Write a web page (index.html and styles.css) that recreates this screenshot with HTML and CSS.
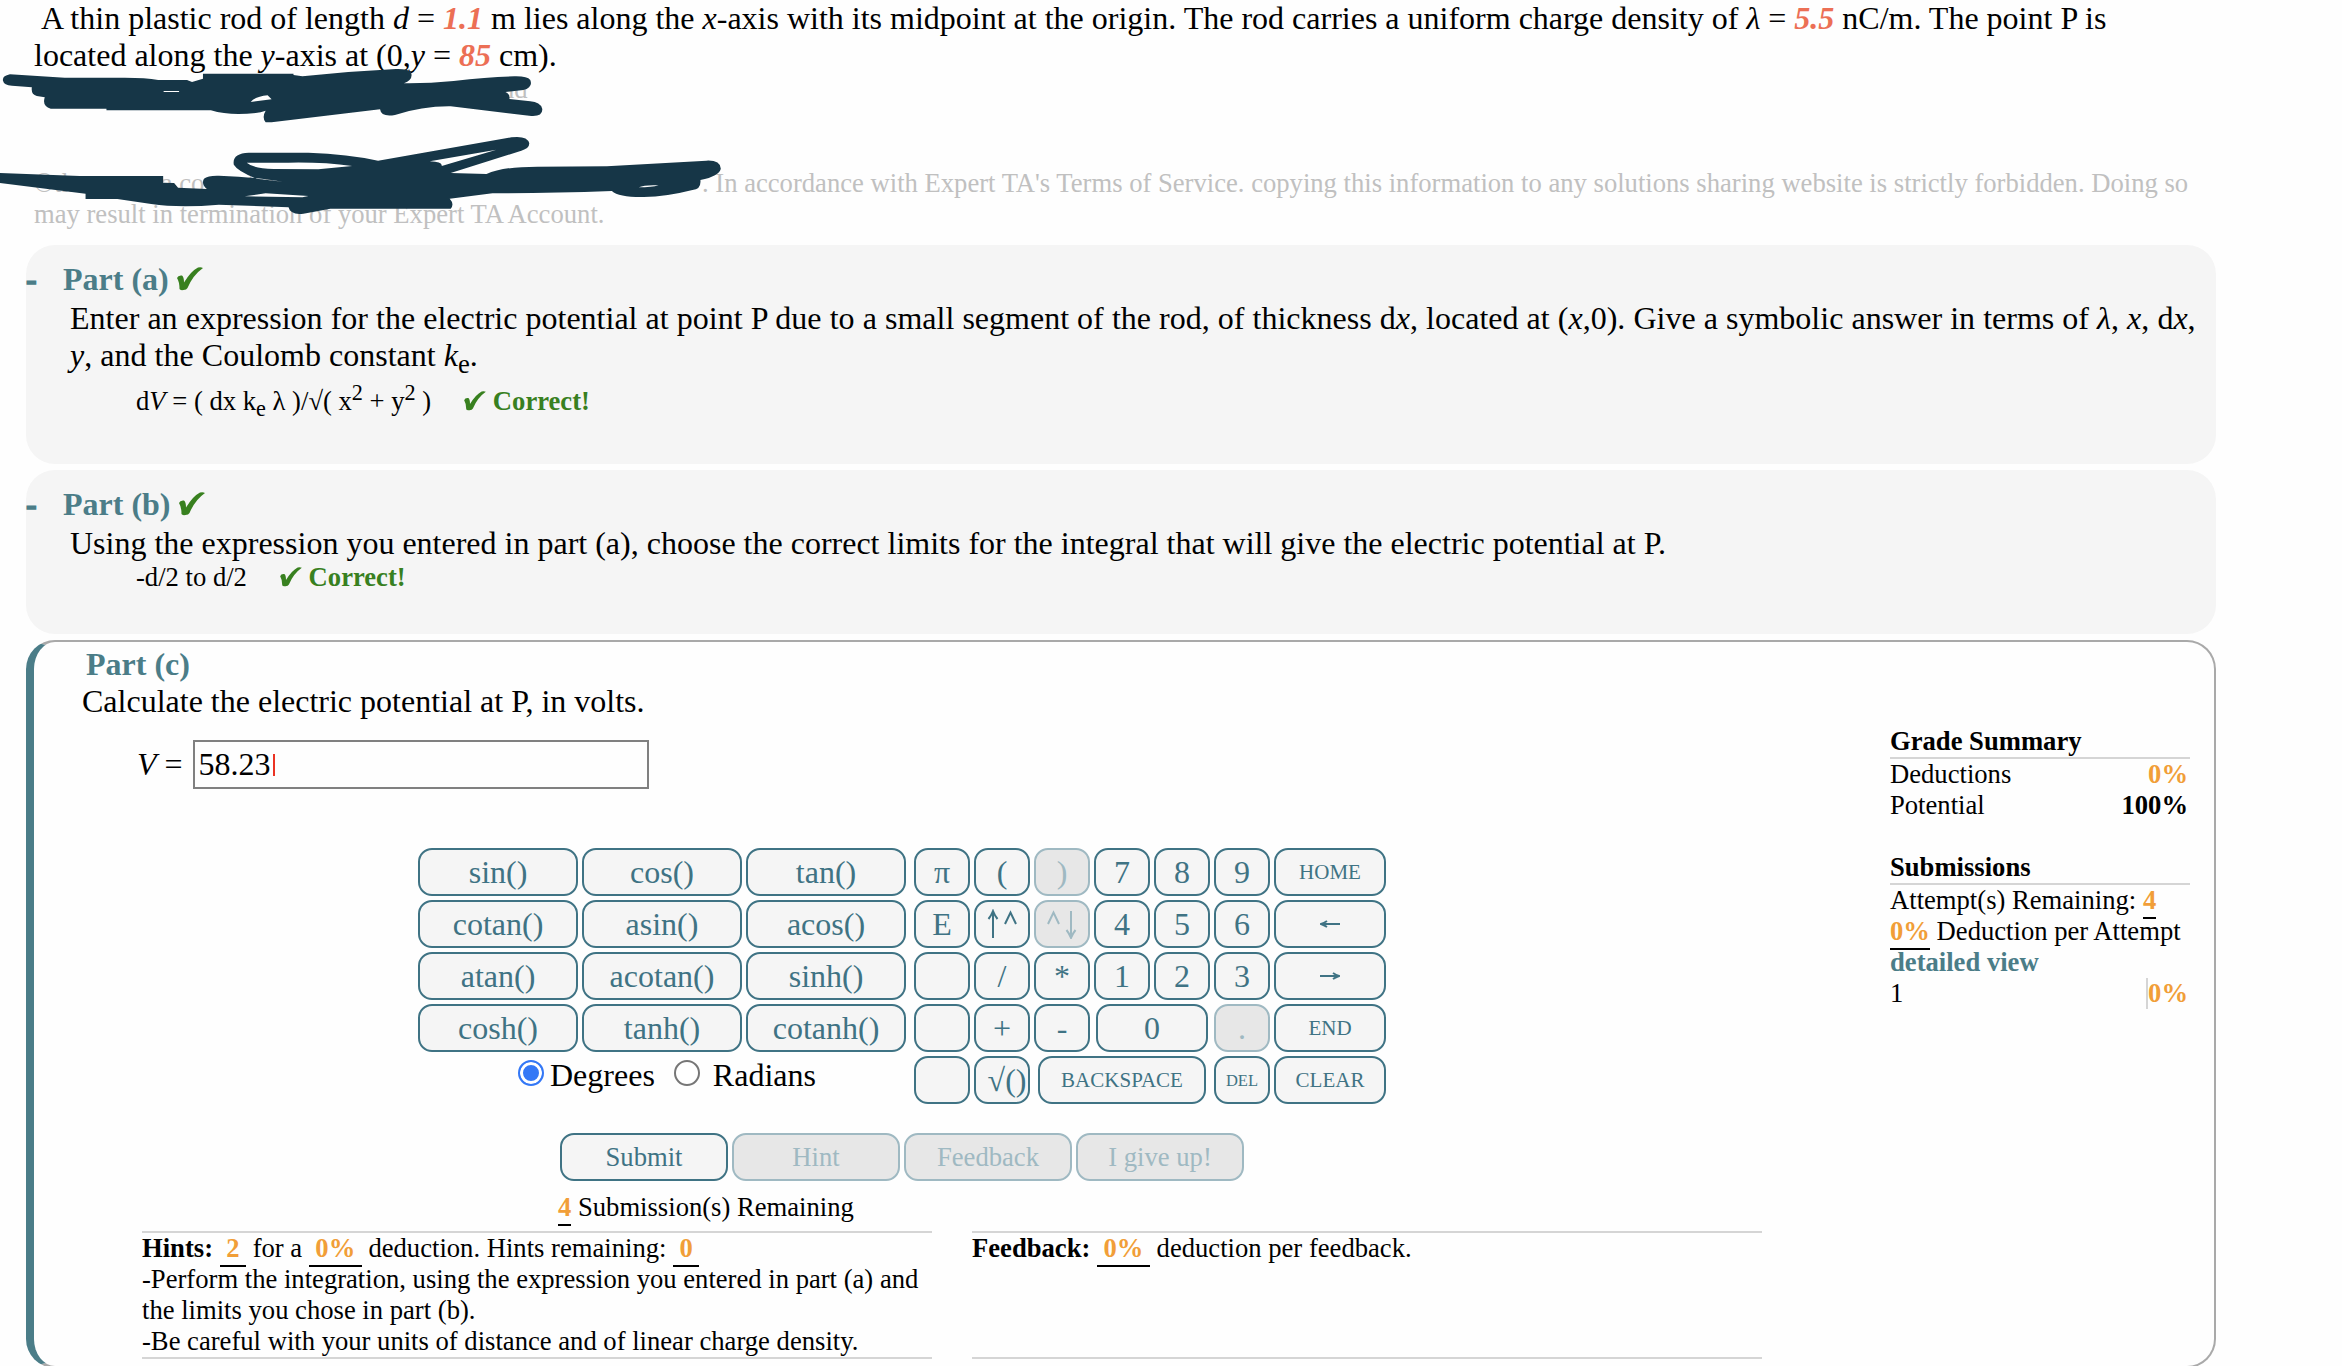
FILE: index.html
```html
<!DOCTYPE html>
<html lang="en">
<head>
  <meta charset="UTF-8" />
  <meta name="viewport" content="width=device-width, initial-scale=1.0" />
  <title>Expert TA</title>
  <link rel="stylesheet" href="styles.css">
</head>
<body>
  <div class="problem">
    <p class="statement">A thin plastic rod of length <i>d</i> = <b class="var">1.1</b> m lies along the <i>x</i>-axis with its midpoint at the origin. The rod carries a uniform charge density of <i>λ</i> = <b class="var">5.5</b> nC/m. The point P is<br>located along the <i>y</i>-axis at (0,<i>y</i> = <b class="var">85</b> cm).</p>
    <div class="owner">nd</div>
    <p class="notice"><span class="tracking">©theexpertta.com - tracking id:</span><span class="terms">. In accordance with Expert TA's Terms of Service. copying this information to any solutions sharing website is strictly forbidden. Doing so</span><br>may result in termination of your Expert TA Account.</p>
    <svg class="marker" viewBox="0 0 1568 720" preserveAspectRatio="none">
      <path d="M20 223Q4 228 6 242Q8 256 24 257L64 262Q62 284 74 288L90 292Q84 318 102 326H214V331H424Q466 350 524 337L534 332Q526 352 534 367L546 367L764 328Q766 352 794 345Q850 318 906 319L1068 348Q1092 350 1090 326Q1086 306 1066 304L1024 297Q1026 282 1016 276L1052 270Q1072 262 1066 240Q1060 228 1034 229Q984 230 912 243Q860 251 812 250Q832 238 826 216Q820 206 796 207L700 216L608 229L590 225V221H408V236L386 246L376 240H318Q290 232 240 233H130ZM330 273H360V276H328ZM504 306Q512 290 538 286L546 298Z" />
      <path d="M0 519L160 528H328V548L350 549L358 563L416 567Q404 552 410 536Q418 526 440 527Q520 532 568 545L516 536Q478 514 470 494Q466 460 500 458H620Q700 462 760 482L1028 412Q1060 406 1064 430Q1064 446 1048 452L906 519L978 522Q1010 500 1080 500L1220 499L1420 482Q1448 480 1449 506Q1446 528 1408 540Q1410 568 1392 570Q1340 590 1294 591Q1244 592 1230 573Q1100 580 990 580L904 596Q914 612 906 626H664L610 641Q584 646 580 622L440 614Q360 624 304 612L236 597H172V581L0 549ZM496 488Q510 506 550 507L640 508L708 498Q650 486 580 488ZM864 484Q890 486 888 498L998 449ZM492 589L534 580L620 588L608 592ZM1284 562Q1296 554 1324 556Q1310 562 1284 562Z" />
    </svg>
  </div>

  <div class="part done">
    <h2><span class="toggle">-</span>Part (a) <svg class="check" viewBox="0 0 26 24"><path d="M0 11Q1 8 5 8.500Q7 10 7 15.500Q14 4 21 .5Q24 -.3 26 1Q16 8 10.500 21Q9.500 23 6.500 23Q3 23.500 2.500 22Q2.500 15 0 11Z" /></svg></h2>
    <p class="question long">Enter an expression for the electric potential at point P due to a small segment of the rod, of thickness d<i>x</i>, located at (<i>x</i>,0). Give a symbolic answer in terms of <i>λ</i>, <i>x</i>, d<i>x</i>,<br><i>y</i>, and the Coulomb constant <i>k</i><sub>e</sub>.</p>
    <div class="answer formula"><span class="expr">d<i>V</i> = ( dx k<sub>e</sub> λ )/√( x<sup>2</sup> + y<sup>2</sup> )</span><b class="correct"><svg class="check" viewBox="0 0 26 24"><path d="M0 11Q1 8 5 8.500Q7 10 7 15.500Q14 4 21 .5Q24 -.3 26 1Q16 8 10.500 21Q9.500 23 6.500 23Q3 23.500 2.500 22Q2.500 15 0 11Z" /></svg> Correct!</b></div>
  </div>

  <div class="part done part-b">
    <h2><span class="toggle">-</span>Part (b) <svg class="check" viewBox="0 0 26 24"><path d="M0 11Q1 8 5 8.500Q7 10 7 15.500Q14 4 21 .5Q24 -.3 26 1Q16 8 10.500 21Q9.500 23 6.500 23Q3 23.500 2.500 22Q2.500 15 0 11Z" /></svg></h2>
    <p class="question">Using the expression you entered in part (a), choose the correct limits for the integral that will give the electric potential at P.</p>
    <div class="answer"><span class="expr">-d/2 to d/2</span><b class="correct"><svg class="check" viewBox="0 0 26 24"><path d="M0 11Q1 8 5 8.500Q7 10 7 15.500Q14 4 21 .5Q24 -.3 26 1Q16 8 10.500 21Q9.500 23 6.500 23Q3 23.500 2.500 22Q2.500 15 0 11Z" /></svg> Correct!</b></div>
  </div>

  <div class="part active">
    <div class="work">
      <h2>Part (c)</h2>
      <p class="question">Calculate the electric potential at P, in volts.</p>
      <div class="entry"><span><i>V</i> =</span><div class="field">58.23<span class="caret"></span></div></div>

      <div class="keypad">
        <div class="functions">
          <div class="trig">
            <button>sin()</button><button>cos()</button><button>tan()</button>
            <button>cotan()</button><button>asin()</button><button>acos()</button>
            <button>atan()</button><button>acotan()</button><button>sinh()</button>
            <button>cosh()</button><button>tanh()</button><button>cotanh()</button>
          </div>
          <div class="units">
            <label><span class="radio on"></span>Degrees</label>
            <label class="radians"><span class="radio"></span>Radians</label>
          </div>
        </div>
        <div class="numbers">
          <button>π</button><button>(</button><button disabled>)</button><button>7</button><button>8</button><button>9</button><button class="word">HOME</button>
          <button>E</button>
          <button><svg width="30" height="30" viewBox="0 0 30 30"><path d="M6 2V29M1.500 10Q4 7 6 2Q8 7 10.500 10M18 15L23.500 3.500L29 15" /></svg></button>
          <button disabled><svg width="30" height="30" viewBox="0 0 30 30"><path d="M1 15L6.500 3.500L12 15M24 2V29M19.500 21Q22 24 24 29Q26 24 28.500 21" /></svg></button>
          <button>4</button><button>5</button><button>6</button>
          <button><svg width="20" height="12" viewBox="0 0 20 12"><path d="M1 6H20M7 3Q4 5 1 6Q4 7 7 9" /></svg></button>
          <button></button><button>/</button><button>*</button><button>1</button><button>2</button><button>3</button>
          <button><svg width="20" height="12" viewBox="0 0 20 12"><path d="M0 6H19M13 3Q16 5 19 6Q16 7 13 9" /></svg></button>
          <button></button><button>+</button><button>-</button><button class="zero">0</button><button disabled>.</button><button class="word">END</button>
          <button></button><button class="root">√()</button><button class="word backspace">BACKSPACE</button><button class="word del">DEL</button><button class="word">CLEAR</button>
        </div>
      </div>

      <div class="actions">
        <button>Submit</button><button disabled>Hint</button><button disabled>Feedback</button><button disabled>I give up!</button>
      </div>
      <div class="remaining"><b class="amount">4</b> Submission(s) Remaining</div>

      <div class="help">
        <div class="help-box">
          <b>Hints:</b> <b class="amount pad">2</b> for a <b class="amount pad">0%</b> deduction. Hints remaining: <b class="amount pad">0</b><br>
          -Perform the integration, using the expression you entered in part (a) and<br>
          the limits you chose in part (b).<br>
          -Be careful with your units of distance and of linear charge density.
        </div>
        <div class="help-box">
          <b>Feedback:</b> <b class="amount pad">0%</b> deduction per feedback.
        </div>
      </div>
    </div>

    <div class="summary">
      <h3>Grade Summary</h3>
      <div class="row"><span>Deductions</span><b class="orange">0%</b></div>
      <div class="row"><span>Potential</span><b>100%</b></div>
      <h3 class="second">Submissions</h3>
      <div>Attempt(s) Remaining: <b class="amount">4</b></div>
      <div><b class="amount">0%</b> Deduction per Attempt</div>
      <div><b class="detail">detailed view</b></div>
      <div class="row"><span>1</span><b class="orange score">0%</b></div>
    </div>
  </div>
</body>
</html>
```
FILE: styles.css
```css
* {
  box-sizing: border-box;
}
body {
  margin: 0;
  height: 1366px;
  overflow: hidden;
  background: #fefefe;
  color: #000;
  font-family: "Liberation Serif", Times, serif;
  font-size: 26.640px;
  line-height: 31px;
}
p, h2, h3 {
  margin: 0;
}
sub, sup {
  line-height: 0;
}
.problem {
  position: relative;
  height: 245px;
  padding-left: 34px;
  white-space: nowrap;
}
.statement {
  font-size: 32px;
  line-height: 37px;
  text-indent: 7px;
}
.var {
  color: #ec6f55;
  font-style: italic;
}
.owner {
  height: 94px;
  padding-left: 467px;
  color: #c0c0c0;
}
.notice {
  color: #c0c0c0;
}
.tracking {
  display: inline-block;
  width: 668px;
}
.marker {
  position: absolute;
  left: 0;
  top: 0;
  width: 780px;
  height: 240px;
  fill: #163647;
  fill-rule: evenodd;
}
.part {
  width: 2190px;
  margin-left: 26px;
  border-radius: 29px;
}
.done {
  height: 219px;
  margin-bottom: 6px;
  padding: 16px 0 0 37px;
  background: #f5f5f5;
}
.part-b {
  height: 164px;
}
h2 {
  font-size: 32px;
  line-height: 37px;
  color: #4b7d88;
}
.toggle {
  display: inline-block;
  width: 37px;
  margin-left: -37px;
  -webkit-text-stroke: 1.500px #4b7d88;
}
.check {
  width: 26px;
  height: 24px;
  fill: #38801f;
  vertical-align: -1px;
}
.question {
  font-size: 32px;
  line-height: 37px;
  white-space: nowrap;
}
.long {
  word-spacing: 0.100px;
}
.done .question {
  margin: 2px 0 0 7px;
}
.answer {
  margin-left: 73px;
  white-space: nowrap;
}
.formula {
  margin-top: 12px;
}
.correct {
  color: #38801f;
  margin-left: 33px;
}
.correct .check {
  width: 22px;
  height: 20px;
}
.active {
  display: flex;
  height: 728px;
  border: 2px solid #a9a9a9;
  border-left: 8px solid #4b7d88;
}
.work {
  width: 1856px;
  padding-top: 4px;
}
.active h2 {
  padding-left: 52px;
}
.active .question {
  padding-left: 48px;
}
.entry {
  display: flex;
  align-items: center;
  gap: 10px;
  padding: 20px 0 0 103px;
  font-size: 32px;
}
.field {
  display: flex;
  align-items: center;
  width: 456px;
  height: 49px;
  padding-left: 4px;
  border: 2px solid #808080;
}
.caret {
  width: 2px;
  height: 22px;
  margin-left: 2px;
  background: #eb3323;
}
.keypad {
  display: flex;
  gap: 8px;
  margin: 59px 0 0 384px;
}
button {
  display: flex;
  align-items: center;
  justify-content: center;
  height: 48px;
  padding: 0;
  border: 2px solid #3f7384;
  border-radius: 14px;
  background: #f5f5f5;
  color: #3f7384;
  font-family: inherit;
  font-size: 32px;
  line-height: 37px;
}
button:disabled {
  background: #e7e7e7;
  border-color: #9fb9c2;
  color: #9fb9c2;
}
button svg {
  fill: none;
  stroke: currentColor;
  stroke-width: 2;
}
.trig {
  display: grid;
  grid-template-columns: repeat(3, 160px);
  gap: 4px;
}
.units {
  display: flex;
  padding: 8px 0 0 100px;
  font-size: 32px;
}
.units label {
  display: flex;
}
.radio {
  width: 26px;
  height: 26px;
  margin-right: 6px;
  border: 2px solid #767676;
  border-radius: 50%;
  background: #fff;
}
.on {
  border-color: #3478f6;
  background: #3478f6;
  box-shadow: inset 0 0 0 3px #fff;
}
.radians {
  margin-left: 19px;
}
.radians .radio {
  margin-right: 13px;
}
.numbers {
  display: grid;
  grid-template-columns: repeat(6, 56px) 112px;
  gap: 4px;
}
.numbers .word {
  font-size: 21px;
}
.numbers .zero {
  grid-column: span 2;
  margin: 0 2px;
}
.numbers .backspace {
  grid-column: span 3;
  margin: 0 4px;
}
.numbers .del {
  font-size: 16.500px;
}
.root {
  padding-left: 10px;
}
.actions {
  display: flex;
  gap: 4px;
  margin: 29px 0 0 526px;
}
.actions button {
  width: 168px;
  font-size: 26.640px;
}
.remaining {
  margin: 11px 0 8px 524px;
}
.amount, .orange {
  color: #f19e38;
}
.amount {
  border-bottom: 2px solid #000;
  padding-bottom: 2px;
}
.pad {
  padding-left: 6.500px;
  padding-right: 6.500px;
}
.help {
  display: flex;
  gap: 40px;
  padding-left: 108px;
}
.help-box {
  width: 790px;
  height: 128px;
  border-top: 2px solid #d5d5d5;
  border-bottom: 2px solid #d5d5d5;
  white-space: nowrap;
}
.summary {
  width: 300px;
  padding-top: 83px;
  white-space: nowrap;
}
h3 {
  font-size: 26.640px;
  line-height: 32px;
  border-bottom: 2px solid #d5d5d5;
}
.second {
  margin-top: 30px;
}
.row {
  display: flex;
  justify-content: space-between;
  padding-right: 2px;
}
.detail {
  color: #4b7d88;
}
.score {
  border-left: 2px solid #d5d5d5;
}
```
